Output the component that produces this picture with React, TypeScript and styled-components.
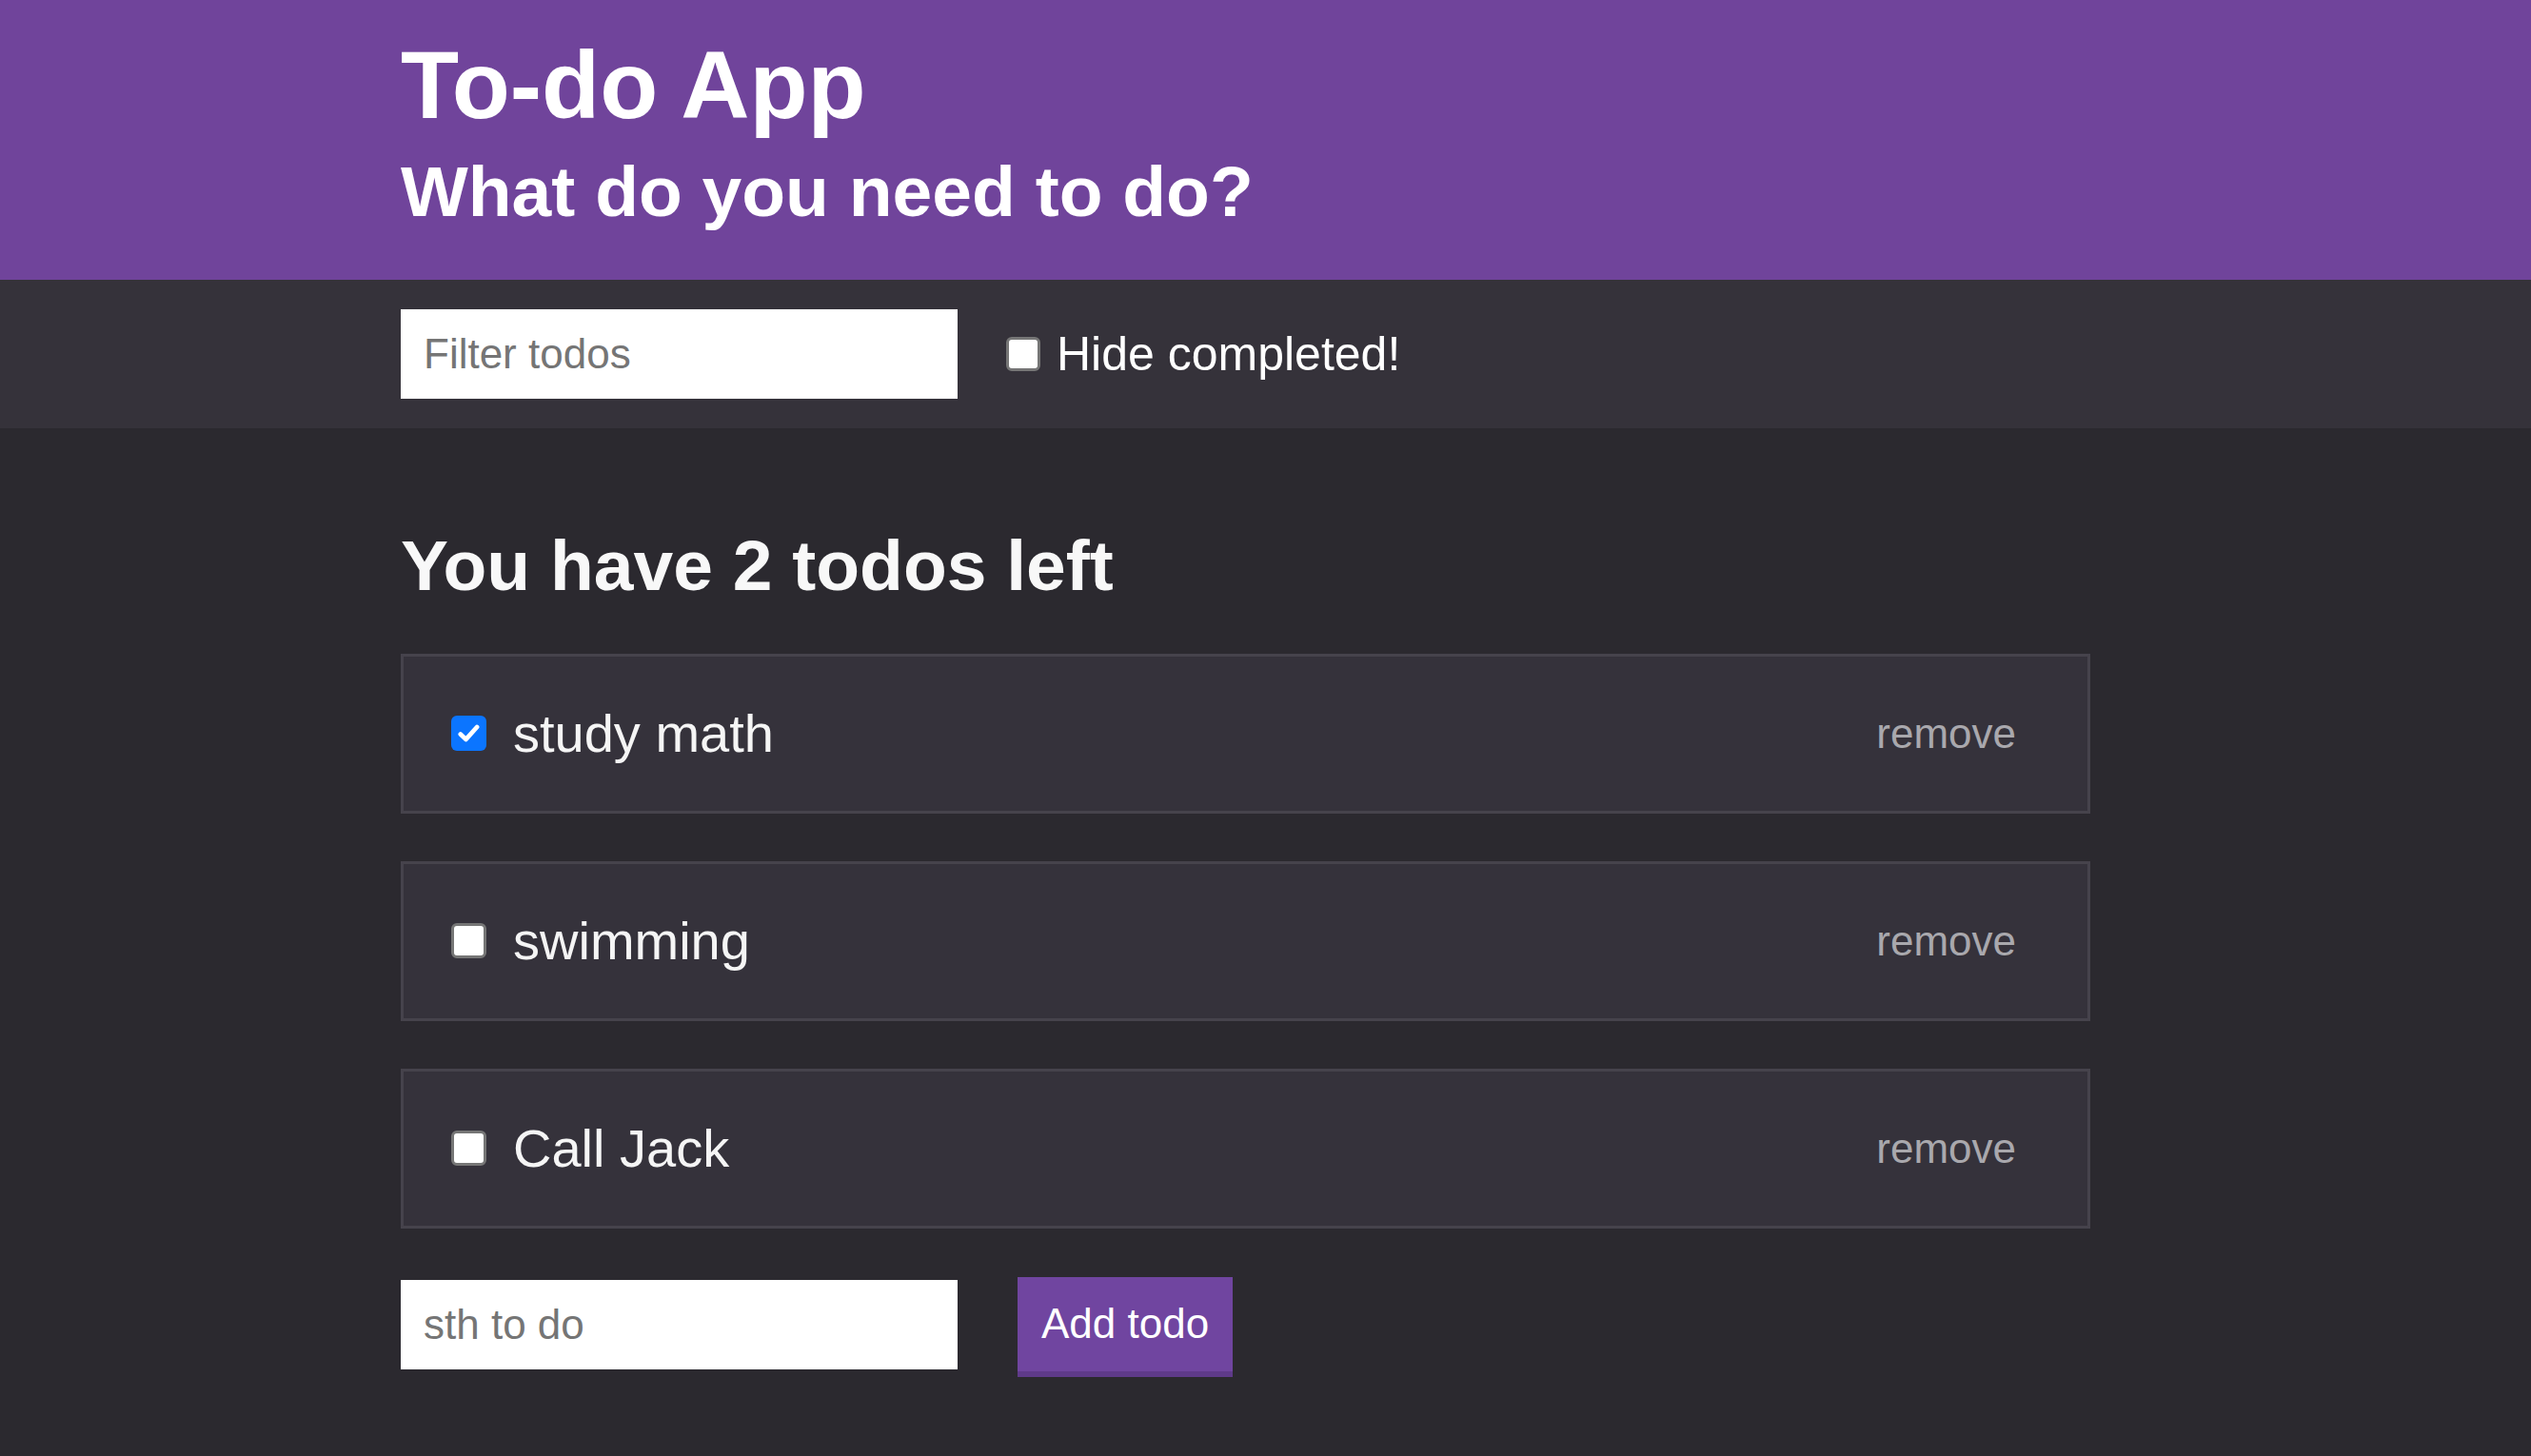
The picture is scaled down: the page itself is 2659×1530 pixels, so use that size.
import React, { useState } from "react";
import styled, { createGlobalStyle } from "styled-components";

const GlobalStyle = createGlobalStyle`
  html, body {
    margin: 0;
    padding: 0;
    background: #2b292f;
  }
  body {
    font-family: "Liberation Sans", Arial, sans-serif;
    color: #ffffff;
  }
`;

const Page = styled.div`
  min-height: 100vh;
  background: #2b292f;
`;

const Header = styled.header`
  background: #70449b;
  padding: 32px 0 50px 421px;
`;

const Title = styled.h1`
  margin: 0;
  font-size: 100px;
  font-weight: 700;
  line-height: 1.15;
`;

const Subtitle = styled.h2`
  margin: 11px 0 0;
  font-size: 75px;
  font-weight: 700;
  line-height: 1.15;
`;

const FilterBar = styled.div`
  background: #35323a;
  padding: 31px 0 31px 421px;
  display: flex;
  align-items: center;
`;

const TextInput = styled.input<{ $offset?: number }>`
  box-sizing: border-box;
  width: 585px;
  height: 94px;
  margin-top: ${(p) => p.$offset || 0}px;
  border: none;
  outline: none;
  padding: 0 24px;
  font-family: "Liberation Sans", Arial, sans-serif;
  font-size: 44px;
  color: #222;
  background: #ffffff;
  &::placeholder {
    color: #757575;
  }
`;

const CheckLabel = styled.label`
  display: flex;
  align-items: center;
  gap: 17px;
  margin-left: 51px;
  font-size: 50px;
  color: #ffffff;
  cursor: pointer;
`;

const Box = styled.span<{ $size: number; $checked: boolean }>`
  box-sizing: border-box;
  width: ${(p) => p.$size}px;
  height: ${(p) => p.$size}px;
  border-radius: 6px;
  flex: none;
  display: flex;
  align-items: center;
  justify-content: center;
  background: ${(p) => (p.$checked ? "#0b75ff" : "#ffffff")};
  border: ${(p) => (p.$checked ? "none" : "3px solid #767676")};
  svg {
    width: 78%;
    height: 78%;
  }
`;

const Main = styled.main`
  padding: 101px 0 60px 421px;
`;

const Heading = styled.h2`
  margin: 0 0 49px;
  font-size: 75px;
  font-weight: 700;
  line-height: 1.15;
  color: #f8f8f8;
`;

const List = styled.ul`
  list-style: none;
  margin: 0;
  padding: 0;
  width: 1775px;
  display: flex;
  flex-direction: column;
  gap: 50px;
`;

const Item = styled.li`
  box-sizing: border-box;
  height: 168px;
  background: #35323b;
  border: 3px solid #46434c;
  padding: 0 75px 0 50px;
  display: flex;
  align-items: center;
  justify-content: space-between;
`;

const ItemLabel = styled.label`
  display: flex;
  align-items: center;
  gap: 28px;
  cursor: pointer;
`;

const ItemText = styled.span`
  font-size: 56px;
  color: #f5f5f5;
`;

const RemoveButton = styled.button`
  background: none;
  border: none;
  padding: 0;
  font-family: "Liberation Sans", Arial, sans-serif;
  font-size: 44px;
  color: #a9a8ad;
  cursor: pointer;
`;

const AddForm = styled.form`
  display: flex;
  align-items: flex-start;
  gap: 63px;
  margin-top: 51px;
`;

const AddButton = styled.button`
  box-sizing: border-box;
  height: 105px;
  padding: 0 25px;
  background: #7045a0;
  border: none;
  border-bottom: 6px solid #5f3a8a;
  color: #ffffff;
  font-family: "Liberation Sans", Arial, sans-serif;
  font-size: 44px;
  cursor: pointer;
`;

function CheckBox({ size, checked }: { size: number; checked: boolean }) {
  return (
    <Box $size={size} $checked={checked}>
      {checked && (
        <svg viewBox='0 0 16 16'>
          <path
            d='M3.2 8.6 L6.4 11.6 L12.8 4.4'
            fill='none'
            stroke='#ffffff'
            strokeWidth='2.6'
            strokeLinecap='round'
            strokeLinejoin='round'
          />
        </svg>
      )}
    </Box>
  );
}

type Todo = { id: number; text: string; done: boolean };

export default function App() {
  const [todos, setTodos] = useState<Todo[]>([
    { id: 1, text: "study math", done: true },
    { id: 2, text: "swimming", done: false },
    { id: 3, text: "Call Jack", done: false },
  ]);
  const [filter, setFilter] = useState("");
  const [hideDone, setHideDone] = useState(false);
  const [draft, setDraft] = useState("");

  const left = todos.filter((t) => !t.done).length;
  const shown = todos.filter(
    (t) =>
      t.text.toLowerCase().includes(filter.toLowerCase()) &&
      !(hideDone && t.done)
  );

  const toggle = (id: number) =>
    setTodos(todos.map((t) => (t.id === id ? { ...t, done: !t.done } : t)));

  const add = (e: React.FormEvent) => {
    e.preventDefault();
    if (!draft.trim()) return;
    setTodos([...todos, { id: Date.now(), text: draft.trim(), done: false }]);
    setDraft("");
  };

  return (
    <Page>
      <GlobalStyle />
      <Header>
        <Title>To-do App</Title>
        <Subtitle>What do you need to do?</Subtitle>
      </Header>
      <FilterBar>
        <TextInput
          placeholder='Filter todos'
          value={filter}
          onChange={(e) => setFilter(e.target.value)}
        />
        <CheckLabel onClick={() => setHideDone(!hideDone)}>
          <CheckBox size={36} checked={hideDone} />
          Hide completed!
        </CheckLabel>
      </FilterBar>
      <Main>
        <Heading>You have {left} todos left</Heading>
        <List>
          {shown.map((t) => (
            <Item key={t.id}>
              <ItemLabel onClick={() => toggle(t.id)}>
                <CheckBox size={37} checked={t.done} />
                <ItemText>{t.text}</ItemText>
              </ItemLabel>
              <RemoveButton
                onClick={() => setTodos(todos.filter((x) => x.id !== t.id))}
              >
                remove
              </RemoveButton>
            </Item>
          ))}
        </List>
        <AddForm onSubmit={add}>
          <TextInput
            $offset={3}
            placeholder='sth to do'
            value={draft}
            onChange={(e) => setDraft(e.target.value)}
          />
          <AddButton type='submit'>Add todo</AddButton>
        </AddForm>
      </Main>
    </Page>
  );
}
